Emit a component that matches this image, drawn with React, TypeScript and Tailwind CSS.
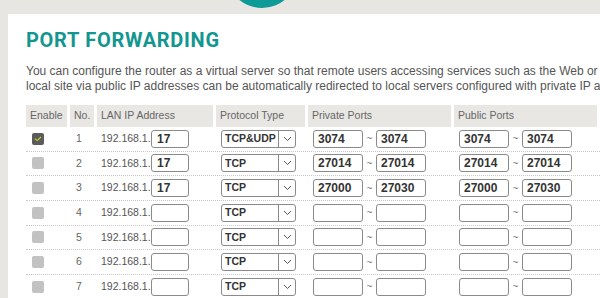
import React from 'react';

type Row = {
  no: number;
  checked: boolean;
  ip: string;
  proto: string;
  priv: [string, string];
  pub: [string, string];
};

const rows: Row[] = [
  { no: 1, checked: true, ip: '17', proto: 'TCP&UDP', priv: ['3074', '3074'], pub: ['3074', '3074'] },
  { no: 2, checked: false, ip: '17', proto: 'TCP', priv: ['27014', '27014'], pub: ['27014', '27014'] },
  { no: 3, checked: false, ip: '17', proto: 'TCP', priv: ['27000', '27030'], pub: ['27000', '27030'] },
  { no: 4, checked: false, ip: '', proto: 'TCP', priv: ['', ''], pub: ['', ''] },
  { no: 5, checked: false, ip: '', proto: 'TCP', priv: ['', ''], pub: ['', ''] },
  { no: 6, checked: false, ip: '', proto: 'TCP', priv: ['', ''], pub: ['', ''] },
  { no: 7, checked: false, ip: '', proto: 'TCP', priv: ['', ''], pub: ['', ''] },
];

const cols = 'grid grid-cols-[41px_24px_116px_89px_143px_143px] gap-x-[3px]';

const Box: React.FC<{ value: string; className?: string }> = ({ value, className = '' }) => (
  <div
    className={`h-[18px] border border-[#8a8a8a] rounded-[3px] bg-white pl-[4px] flex items-center text-[12px] font-bold text-[#333] ${className}`}
  >
    {value}
  </div>
);

const Check: React.FC<{ checked: boolean }> = ({ checked }) =>
  checked ? (
    <div className="w-[12px] h-[12px] rounded-[2px] bg-[#5b5b5b] flex items-center justify-center">
      <svg width="8" height="6" viewBox="0 0 8 6" fill="none">
        <path d="M1 2.6 L3.2 4.6 L7 1" stroke="#c9d22a" strokeWidth="1.1" />
      </svg>
    </div>
  ) : (
    <div className="w-[12px] h-[12px] rounded-[2px] bg-[#c2c2c2]" />
  );

const PortPair: React.FC<{ values: [string, string] }> = ({ values }) => (
  <div className="flex items-center pl-[5px]">
    <Box value={values[0]} className="w-[50px]" />
    <span className="w-[13px] text-center text-[10px] text-[#777]">~</span>
    <Box value={values[1]} className="w-[50px]" />
  </div>
);

const App: React.FC = () => {
  const headers = ['Enable', 'No.', 'LAN IP Address', 'Protocol Type', 'Private Ports', 'Public Ports'];

  return (
    <div className="w-[600px] h-[298px] overflow-hidden bg-[#e8e6e3] font-['Liberation_Sans',Arial,sans-serif]">
      <div className="h-[14px] overflow-hidden">
        <div className="w-[72px] h-[72px] rounded-full bg-[#0e9a97] ml-[226px] -mt-[64px]" />
      </div>
      <div className="ml-[8px] w-[640px] h-[300px] bg-white pl-[18px]">
        <h1 className="pt-[16px] text-[20px] leading-[20px] font-bold tracking-[0.7px] text-[#12968f] font-['Roboto',sans-serif]">
          PORT FORWARDING
        </h1>
        <div className="mt-[14px] text-[12px] leading-[15px] text-[#555] whitespace-nowrap">
          <p>You can configure the router as a virtual server so that remote users accessing services such as the Web or FTP at your</p>
          <p>local site via public IP addresses can be automatically redirected to local servers configured with private IP addresses.</p>
        </div>

        <div className="mt-[11px]">
          <div className={`${cols} h-[22px]`}>
            {headers.map((h) => (
              <div key={h} className="bg-[#e9e7e4] text-[10.5px] text-[#666] flex items-center pl-[4px]">
                {h}
              </div>
            ))}
          </div>

          {rows.map((r) => (
            <div
              key={r.no}
              className={`${cols} h-[24.67px] items-center border-b border-dotted border-[#c8c8c8] text-[10.5px] text-[#666]`}
            >
              <div className="pl-[6px]">
                <Check checked={r.checked} />
              </div>
              <div className="pl-[6px]">{r.no}</div>
              <div className="flex items-center pl-[4px]">
                <span className="text-[#555] w-[50px]">192.168.1.</span>
                <Box value={r.ip} className="w-[38px] pl-[5px]" />
              </div>
              <div className="pl-[5px]">
                <div className="w-[75px] h-[18px] border border-[#8a8a8a] rounded-[3px] flex">
                  <div className="w-[57px] border-r border-[#8a8a8a] pl-[3px] flex items-center text-[10.5px] font-bold text-[#333]">
                    {r.proto}
                  </div>
                  <div className="flex-1 flex items-center justify-center">
                    <svg width="9" height="6" viewBox="0 0 9 6" fill="none">
                      <path d="M1 1 L4.5 4.5 L8 1" stroke="#555" strokeWidth="1" />
                    </svg>
                  </div>
                </div>
              </div>
              <PortPair values={r.priv} />
              <PortPair values={r.pub} />
            </div>
          ))}
        </div>
      </div>
    </div>
  );
};

export default App;
